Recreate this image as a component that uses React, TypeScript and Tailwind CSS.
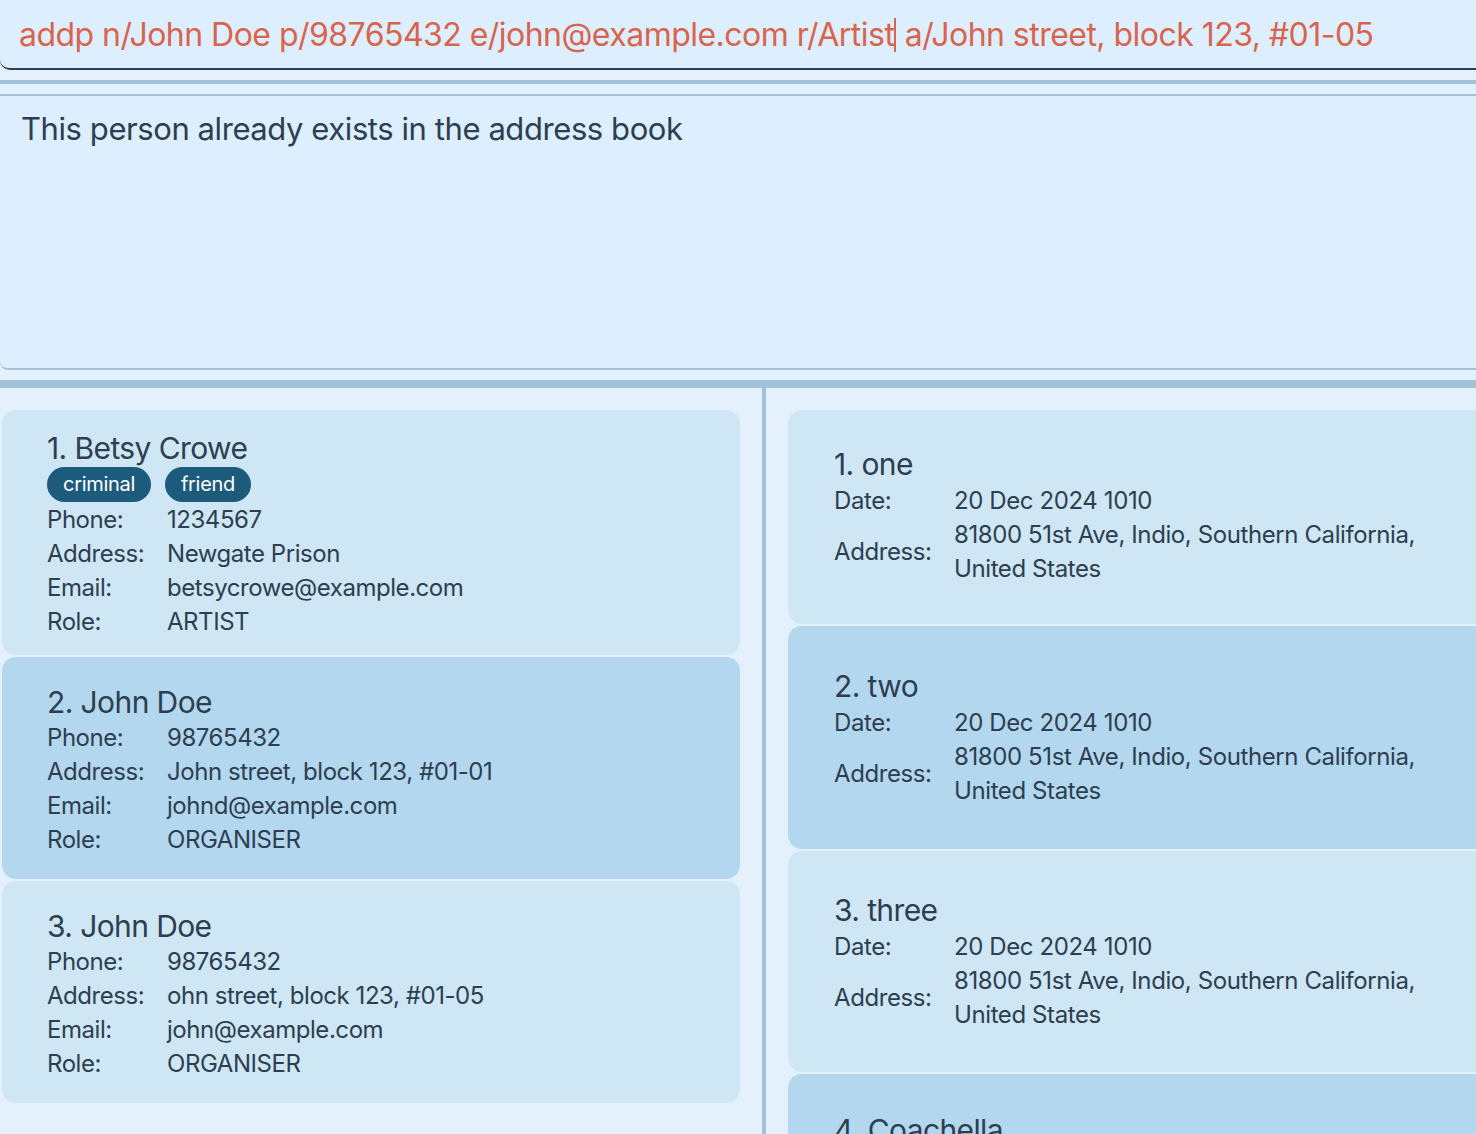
const PERSONS = [
  {
    name: "1. Betsy Crowe",
    tags: ["criminal", "friend"],
    phone: "1234567",
    address: "Newgate Prison",
    email: "betsycrowe@example.com",
    role: "ARTIST",
  },
  {
    name: "2. John Doe",
    tags: [],
    phone: "98765432",
    address: "John street, block 123, #01-01",
    email: "johnd@example.com",
    role: "ORGANISER",
  },
  {
    name: "3. John Doe",
    tags: [],
    phone: "98765432",
    address: "ohn street, block 123, #01-05",
    email: "john@example.com",
    role: "ORGANISER",
  },
];

const EVENTS = [
  { name: "1. one", h: "h-[214px] pb-[2px]" },
  { name: "2. two", h: "h-[223px]" },
  { name: "3. three", h: "h-[221px]" },
];

function Row({ label, value }: { label: string; value: string }) {
  return (
    <div className="flex h-[34px] items-center">
      <span className="w-[120px] shrink-0">{label}</span>
      <span>{value}</span>
    </div>
  );
}

function PersonCard({ p, i }: { p: (typeof PERSONS)[number]; i: number }) {
  return (
    <div
      className={`flex flex-col justify-center rounded-[14px] pl-[45px] ${
        i === 0 ? "h-[245px] pt-[4px]" : "h-[222px] pt-[4px]"
      } ${i % 2 === 1 ? "bg-[#b3d7ee]" : "bg-[#cfe6f5]"}`}
    >
      <div className="text-[30px] leading-[36px] tracking-[-0.6px]">{p.name}</div>
      {p.tags.length > 0 && (
        <div className="flex h-[36px] items-center gap-[14px]">
          {p.tags.map((t) => (
            <span
              key={t}
              className="h-[35px] rounded-full bg-[#1d5b7d] px-[16px] text-[20px] leading-[35px] tracking-[-0.3px] text-white"
            >
              {t}
            </span>
          ))}
        </div>
      )}
      <div className="pt-[1px] text-[24px] tracking-[-0.45px]">
        <Row label="Phone:" value={p.phone} />
        <Row label="Address:" value={p.address} />
        <Row label="Email:" value={p.email} />
        <Row label="Role:" value={p.role} />
      </div>
    </div>
  );
}

function EventCard({ name, h, i }: { name: string; h: string; i: number }) {
  return (
    <div
      className={`flex w-[720px] shrink-0 flex-col justify-center rounded-[14px] pl-[46px] ${h} ${
        i % 2 === 1 ? "bg-[#b3d7ee]" : "bg-[#cfe6f5]"
      }`}
    >
      <div className="text-[30px] leading-[36px] tracking-[-0.6px]">{name}</div>
      <div className="pt-[2px] text-[24px] tracking-[-0.4px]">
        <div className="flex h-[34px] items-center">
          <span className="w-[120px] shrink-0">Date:</span>
          <span>20 Dec 2024 1010</span>
        </div>
        <div className="flex items-center">
          <span className="w-[120px] shrink-0">Address:</span>
          <span className="w-[480px] leading-[34px]">
            81800 51st Ave, Indio, Southern California, United States
          </span>
        </div>
      </div>
    </div>
  );
}

export default function App() {
  return (
    <div className="h-[1134px] w-[1476px] overflow-hidden bg-[#e4f1fc] font-['Inter',sans-serif] text-[#2c3e50]">
      {/* command box */}
      <div className="flex h-[70px] items-center whitespace-nowrap rounded-bl-[10px] border-b-2 border-[#2c3e50] bg-[#ddeeff] pl-[19px] pt-[2px] text-[32px] tracking-[-0.53px] text-[#d9644e]">
        <span>addp n/John Doe p/98765432 e/john@example.com r/Artist</span>
        <span className="inline-block h-[34px] w-[2px] bg-[#d9644e]" />
        <span>&nbsp;a/John street, block 123, #01-05</span>
      </div>
      <div className="h-[10px]" />
      <div className="h-[4px] bg-[#a3c1d9]" />
      <div className="h-[10px]" />

      {/* result box */}
      <div className="h-[276px] rounded-bl-[8px] border-y-2 border-[#a3c1d9] bg-[#ddeeff] pl-[21px] pt-[10px] text-[31px] tracking-[-0.42px]">
        This person already exists in the address book
      </div>
      <div className="h-[10px]" />
      <div className="h-[8px] bg-[#a3c1d9]" />

      {/* lists */}
      <div className="flex h-[746px]">
        <div className="flex w-[762px] shrink-0 flex-col gap-[2px] pl-[2px] pr-[22px] pt-[22px]">
          {PERSONS.map((p, i) => (
            <PersonCard key={i} p={p} i={i} />
          ))}
        </div>
        <div className="w-[4px] shrink-0 bg-[#a3c1d9]" />
        <div className="flex flex-1 flex-col gap-[2px] overflow-hidden pl-[22px] pt-[22px]">
          {EVENTS.map((e, i) => (
            <EventCard key={i} name={e.name} h={e.h} i={i} />
          ))}
          <div className="h-[120px] w-[720px] shrink-0 rounded-[14px] bg-[#b3d7ee] pl-[46px] pt-[38px] text-[30px] leading-[36px] tracking-[-0.6px]">
            4. Coachella
          </div>
        </div>
      </div>
    </div>
  );
}
